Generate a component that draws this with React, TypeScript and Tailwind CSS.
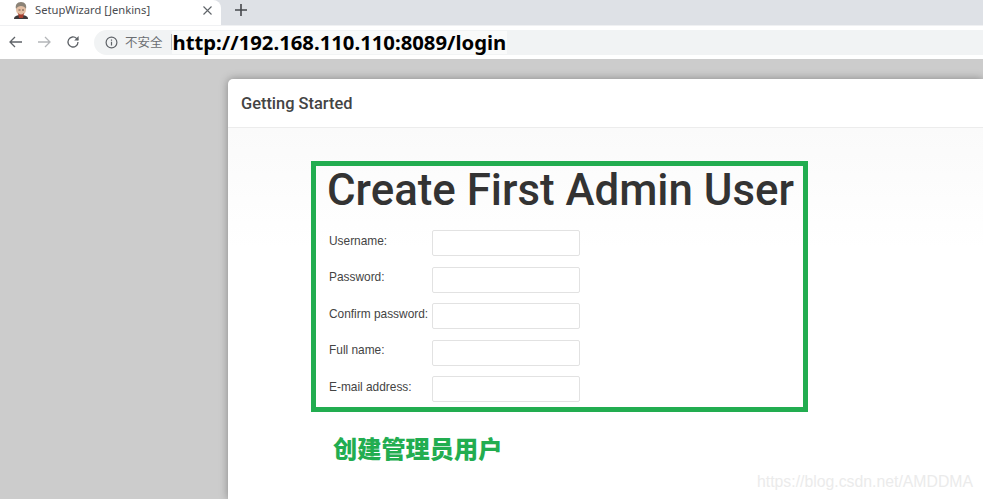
const labels = ["Username:", "Password:", "Confirm password:", "Full name:", "E-mail address:"];

function BrowserBar() {
  return (
    <div className="shrink-0">
      {/* tab strip */}
      <div className="flex h-[25px] bg-[#dee1e6]">
        <div className="flex w-[221px] items-center rounded-tr-lg bg-white pb-[5px] pl-[13px] pr-[9px]">
          <svg width="16" height="17" viewBox="0 0 16 17" className="shrink-0">
            <path d="M1 17c0-3 3-4 7-4s7 1 7 4z" fill="#3c3a3c" />
            <ellipse cx="8" cy="7.5" rx="5" ry="5.5" fill="#e4bfa4" />
            <path d="M3 7C2 3 4 0 8 0s6 3 5 7c-1-2-3-3-5-3S4 5 3 7z" fill="#8b8377" />
            <path d="M5 11c2 2 4 2 6 0l-1 5H6z" fill="#a8402f" />
            <path d="M5.5 8h2M9 8h2" stroke="#4a3a30" strokeWidth="0.8" />
          </svg>
          <span className="ml-[6px] flex-1 whitespace-nowrap font-['Noto_Sans',sans-serif] text-[11.2px] text-[#4a4c50]">SetupWizard [Jenkins]</span>
          <svg width="9" height="9" viewBox="0 0 9 9" stroke="#5f6368" strokeWidth="1.1">
            <path d="M0.5 0.5l8 8M8.5 0.5l-8 8" />
          </svg>
        </div>
        <div className="ml-[14px] flex items-center pb-[5px]">
          <svg width="12" height="12" viewBox="0 0 12 12" stroke="#45484c" strokeWidth="1.6">
            <path d="M6 0v12M0 6h12" />
          </svg>
        </div>
      </div>
      {/* address row */}
      <div className="flex h-[34px] items-center border-t border-t-[#f0f1f3] bg-white pb-[4px] pl-[8px] pt-[3px]">
        <svg width="15" height="14" viewBox="0 0 15 14" fill="none" stroke="#5f6368" strokeWidth="1.3">
          <path d="M14 7H2M7 2L2 7l5 5" />
        </svg>
        <svg width="15" height="14" viewBox="0 0 15 14" fill="none" stroke="#b4b6b9" strokeWidth="1.3" className="ml-[14px]">
          <path d="M1 7h12M8 2l5 5-5 5" />
        </svg>
        <svg width="14" height="14" viewBox="0 0 14 14" fill="none" stroke="#5f6368" strokeWidth="1.3" className="ml-[14px]">
          <path d="M12 7a5 5 0 1 1-1.5-3.6L12 5" />
          <path d="M12.6 1V5.4H8.2" fill="#5f6368" stroke="none" />
        </svg>
        <div className="ml-[14px] flex h-[25px] flex-1 items-center rounded-l-[13px] bg-[#f1f3f4] pl-[11px]">
          <svg width="13" height="13" viewBox="0 0 13 13" fill="none" stroke="#5f6368" strokeWidth="1.2" className="shrink-0">
            <circle cx="6.5" cy="6.5" r="5.4" />
            <path d="M6.5 5.8v3.6M6.5 3.4v1.3" />
          </svg>
          <span className="ml-[7px] whitespace-nowrap font-['Noto_Sans_CJK_SC',sans-serif] text-[12.5px] text-[#6b6e72]">不安全</span>
          <span className="ml-[8px] h-[16px] w-px bg-[#b9bbbe]" />
          <span className="whitespace-nowrap bg-[#f9fafa] pl-px pr-[1px] font-['Noto_Sans',sans-serif] text-[20.3px] font-bold leading-[23px] text-black">
            http://192.168.110.110:8089/login
          </span>
        </div>
      </div>
    </div>
  );
}

export default function App() {
  return (
    <div className="flex h-[499px] w-[983px] flex-col overflow-hidden bg-[#cccccc]">
      <BrowserBar />
      <div className="flex-1 pl-[228px] pt-[20px]">
        <div className="h-full rounded-tl-[5px] bg-white shadow-[0_0_8px_rgba(0,0,0,0.35)]">
          <div className="flex h-[49px] items-center border-b border-[#ececec] pl-[13px] pt-[2px] font-['Roboto',sans-serif] text-[16.4px] font-medium text-[#444444]">
            Getting Started
          </div>
          <div className="h-full bg-gradient-to-b from-[#fafafa] to-white to-[120px] pl-[83px] pt-[33px]">
            <div className="h-[251px] w-[497px] border-[5px] border-[#22ad50] pl-[11px] pt-px">
              <h1 className="whitespace-nowrap font-['Roboto',sans-serif] text-[43.8px] font-medium leading-[47px] text-[#333333]">Create First Admin User</h1>
              <div className="mt-[16px] flex flex-col gap-[10.5px]">
                {labels.map((label) => (
                  <div key={label} className="flex h-[26px] items-center">
                    <span className="mb-[3px] ml-[2px] w-[103px] whitespace-nowrap font-['Liberation_Sans',sans-serif] text-[11.9px] text-[#444444]">{label}</span>
                    <div className="h-[26px] w-[148px] rounded-[2px] border border-[#e2e2e2] bg-white" />
                  </div>
                ))}
              </div>
            </div>
            <p className="ml-[22px] mt-[18px] font-['Noto_Sans_CJK_SC',sans-serif] text-[24.2px] font-black leading-[35px] text-[#22ad50]">创建管理员用户</p>
            <p className="ml-[446px] mt-[7px] whitespace-nowrap font-['Liberation_Sans',sans-serif] text-[15.8px] leading-[20px] text-[#ebebeb]">https://blog.csdn.net/AMDDMA</p>
          </div>
        </div>
      </div>
    </div>
  );
}
